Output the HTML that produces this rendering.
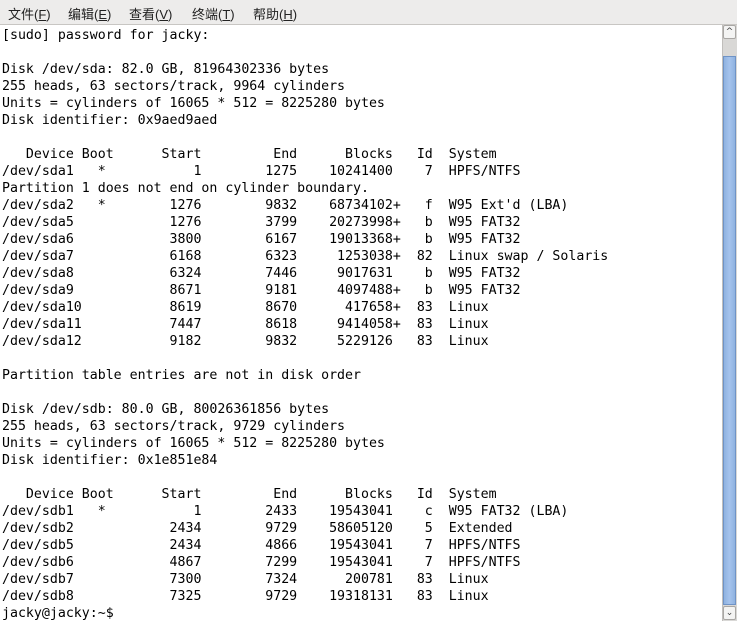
<!DOCTYPE html>
<html><head><meta charset="utf-8"><style>
html,body{margin:0;padding:0;width:737px;height:622px;overflow:hidden;background:#fff}
#menu{position:absolute;left:0;top:0;width:737px;height:24px;background:#edeceb;border-bottom:1px solid #c8c6c3;font-family:"Liberation Sans","WenQuanYi Zen Hei","Noto Sans CJK SC",sans-serif;font-size:13px;color:#222}
#menu span{position:absolute;top:4px}
#term{position:absolute;left:2px;top:27px;margin:0;font-family:"DejaVu Sans Mono","Liberation Mono",monospace;font-size:13.25px;line-height:17px;color:#000;white-space:pre}
#sb{position:absolute;left:722px;top:25px;width:14px;height:596px;background:#d9d8d6;border-left:1px solid #c0bebb}
.btn{position:absolute;left:0;width:13px;height:14px;background:#f4f4f3;border:1px solid #a9a7a4;border-radius:2px;box-sizing:border-box;font-size:9px;color:#444;text-align:center;line-height:13px;font-family:"DejaVu Sans",sans-serif}
#thumb{position:absolute;left:0;top:31px;width:13px;height:549px;background:linear-gradient(90deg,#8fb2e0,#a5c3ec 50%,#8fb2e0);border:1px solid #6f93c6;box-sizing:border-box}
</style></head><body>
<div id="menu"><span style="left:8px">文件(<u>F</u>)</span><span style="left:68px">编辑(<u>E</u>)</span><span style="left:129px">查看(<u>V</u>)</span><span style="left:192px">终端(<u>T</u>)</span><span style="left:253px">帮助(<u>H</u>)</span></div>
<pre id="term">[sudo] password for jacky:

Disk /dev/sda: 82.0 GB, 81964302336 bytes
255 heads, 63 sectors/track, 9964 cylinders
Units = cylinders of 16065 * 512 = 8225280 bytes
Disk identifier: 0x9aed9aed

   Device Boot      Start         End      Blocks   Id  System
/dev/sda1   *           1        1275    10241400    7  HPFS/NTFS
Partition 1 does not end on cylinder boundary.
/dev/sda2   *        1276        9832    68734102+   f  W95 Ext'd (LBA)
/dev/sda5            1276        3799    20273998+   b  W95 FAT32
/dev/sda6            3800        6167    19013368+   b  W95 FAT32
/dev/sda7            6168        6323     1253038+  82  Linux swap / Solaris
/dev/sda8            6324        7446     9017631    b  W95 FAT32
/dev/sda9            8671        9181     4097488+   b  W95 FAT32
/dev/sda10           8619        8670      417658+  83  Linux
/dev/sda11           7447        8618     9414058+  83  Linux
/dev/sda12           9182        9832     5229126   83  Linux

Partition table entries are not in disk order

Disk /dev/sdb: 80.0 GB, 80026361856 bytes
255 heads, 63 sectors/track, 9729 cylinders
Units = cylinders of 16065 * 512 = 8225280 bytes
Disk identifier: 0x1e851e84

   Device Boot      Start         End      Blocks   Id  System
/dev/sdb1   *           1        2433    19543041    c  W95 FAT32 (LBA)
/dev/sdb2            2434        9729    58605120    5  Extended
/dev/sdb5            2434        4866    19543041    7  HPFS/NTFS
/dev/sdb6            4867        7299    19543041    7  HPFS/NTFS
/dev/sdb7            7300        7324      200781   83  Linux
/dev/sdb8            7325        9729    19318131   83  Linux
jacky@jacky:~$ </pre>
<div id="sb"><div class="btn" style="top:0">&#94;</div><div id="thumb"></div><div class="btn" style="top:581px">&#8964;</div></div>
</body></html>
